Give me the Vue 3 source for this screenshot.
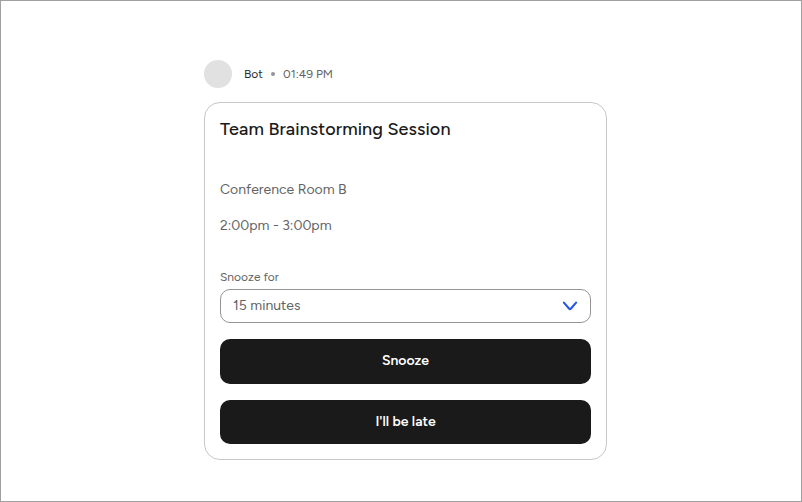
<script setup>
import { ref } from 'vue'

const actions = ['Snooze', "I'll be late"]
const snooze = ref('15 minutes')
</script>

<template>
  <main class="frame">
    <article class="message">
      <header class="meta">
        <span class="avatar"></span>
        <span class="name">Bot</span>
        <span class="dot"></span>
        <time class="time">01:49 PM</time>
      </header>
      <section class="card">
        <h1 class="title"><span>Team Brainstorming Session</span></h1>
        <p class="line place"><span>Conference Room B</span></p>
        <p class="line hours"><span>2:00pm - 3:00pm</span></p>
        <div class="label"><span>Snooze for</span></div>
        <div class="select" role="combobox">
          <span class="value">{{ snooze }}</span>
          <svg class="chevron" width="16" height="10" viewBox="0 0 16 10">
            <path d="M1.9 1.6 L7.2 7.7 Q8 8.5 8.8 7.7 L14.1 1.6" fill="none" stroke="#2457e6" stroke-width="2.1" stroke-linecap="round" stroke-linejoin="round" />
          </svg>
        </div>
        <button v-for="(label, i) in actions" :key="label" class="action" :class="{ second: i === 1 }">
          <span>{{ label }}</span>
        </button>
      </section>
    </article>
  </main>
</template>

<style>
body { margin: 0; background: #fff; }
</style>

<style scoped>
.frame {
  box-sizing: border-box;
  width: 802px;
  height: 502px;
  border: 1px solid #a0a0a0;
  background: #fff;
  padding: 59px 0 0 203px;
  font-family: Figtree, Lato, "Liberation Sans", sans-serif;
  color: #636363;
}
.message { width: 403px; }
.meta {
  display: flex;
  align-items: center;
  height: 28px;
  font-size: 12px;
  line-height: 16px;
}
.avatar {
  width: 28px;
  height: 28px;
  border-radius: 50%;
  background: #e1e1e1;
  margin-right: 12px;
}
.name { width: 27px; color: #2b2b2b; }
.dot { width: 4px; height: 4px; border-radius: 50%; background: #949494; margin-right: 8px; }
.card {
  box-sizing: border-box;
  margin-top: 14px;
  height: 358px;
  border: 1px solid #c8c8c8;
  border-radius: 16px;
  padding: 14px 15px 15px;
}
.title {
  margin: 0;
  font-size: 18px;
  font-weight: 500;
  line-height: 24px;
  letter-spacing: 0.09px;
  color: #1a1a1a;
}
.line { margin: 0; font-size: 14px; line-height: 20px; }
.place { margin-top: 39px; }
.hours { margin-top: 16px; }
.label { margin-top: 33px; font-size: 12px; line-height: 16px; }
.select {
  box-sizing: border-box;
  display: flex;
  align-items: center;
  justify-content: space-between;
  margin-top: 4px;
  height: 34px;
  border: 1px solid #949494;
  border-radius: 10px;
  padding: 0 12px;
  font-size: 14px;
}
.value { line-height: 18px; }
.action {
  display: block;
  width: 100%;
  height: 45px;
  margin: 16px 0 0;
  padding: 0 0 1px;
  border: 0;
  border-radius: 10px;
  background: #1a1a1a;
  color: #fff;
  font-family: inherit;
  font-size: 14px;
  line-height: 18px;
  font-weight: 600;
}
.second { height: 44px; padding-bottom: 0; }
</style>
